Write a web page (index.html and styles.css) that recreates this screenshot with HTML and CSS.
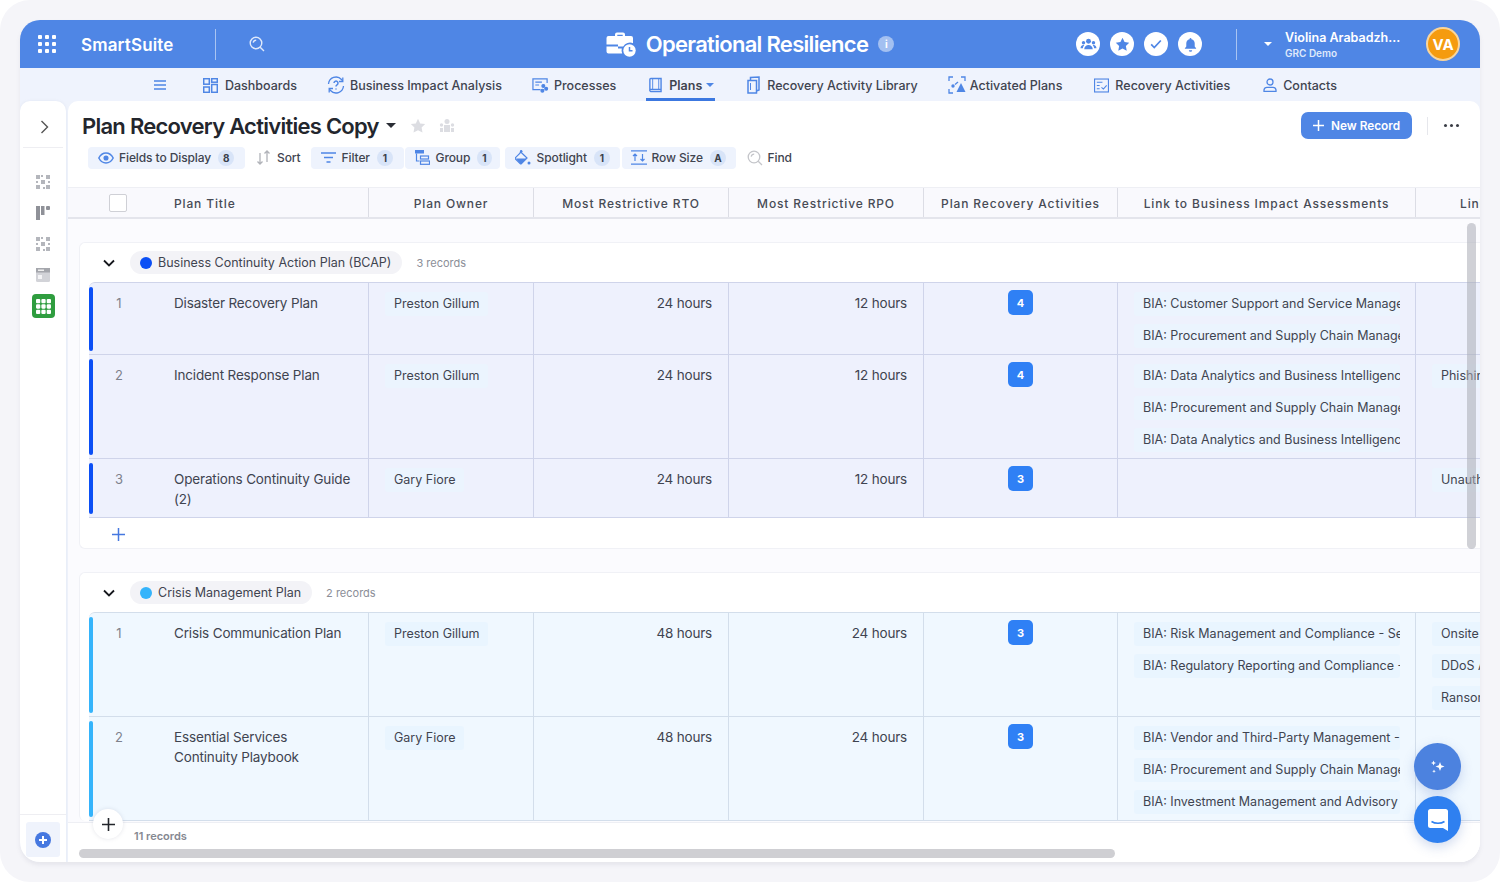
FILE: index.html
```html
<!DOCTYPE html>
<html lang="en">
<head>
<meta charset="utf-8">
<title>Operational Resilience - SmartSuite</title>
<link rel="stylesheet" href="styles.css">
</head>
<body>
<div class="frame">
<div class="app">
  <header class="topbar">
    <div class="top-left">
      <svg class="apps" viewBox="0 0 18 18" width="18" height="18"><g fill="#fff"><rect x="0" y="0" width="4" height="4" rx="1"/><rect x="7" y="0" width="4" height="4" rx="1"/><rect x="14" y="0" width="4" height="4" rx="1"/><rect x="0" y="7" width="4" height="4" rx="1"/><rect x="7" y="7" width="4" height="4" rx="1"/><rect x="14" y="7" width="4" height="4" rx="1"/><rect x="0" y="14" width="4" height="4" rx="1"/><rect x="7" y="14" width="4" height="4" rx="1"/><rect x="14" y="14" width="4" height="4" rx="1"/></g></svg>
      <span class="logo">SmartSuite</span>
      <span class="vline"></span>
      <svg class="search" viewBox="0 0 16 16" width="16" height="16" fill="none" stroke="#dfe9fb" stroke-width="1.4"><circle cx="7" cy="7" r="5.8"/><path d="M4.2 6.6a3 3 0 0 1 3-2.4M11.2 11.2L15 15"/></svg>
    </div>
    <div class="top-center">
      <svg viewBox="0 0 30 25" width="30" height="25"><path fill="#fff" d="M9 2.5A2 2 0 0 1 11 .5h6a2 2 0 0 1 2 2V4h6a2 2 0 0 1 2 2v5.2a8 8 0 0 0-9.8 3.3H12v-2H.5V6a2 2 0 0 1 2-2H9zM11.300 2.800V4h5.400V2.800zM.5 14.500H12v2h3.800a8 8 0 0 0 .4 5H2.500a2 2 0 0 1-2-2z"/><circle cx="23.500" cy="18.500" r="6.200" fill="#fff"/><path d="M23.500 15v3.800h3" fill="none" stroke="#4f86e5" stroke-width="1.500"/></svg>
      <span class="app-title">Operational Resilience</span>
      <span class="info">i</span>
    </div>
    <div class="top-right">
      <span class="round"><svg viewBox="0 0 16 16" width="17" height="17" fill="#4f86e5"><circle cx="8" cy="5" r="2.300"/><circle cx="3.300" cy="6.300" r="1.600"/><circle cx="12.700" cy="6.300" r="1.600"/><path d="M4 12.500c0-2.500 1.800-4 4-4s4 1.500 4 4zM.5 11.500c0-1.800 1-3 2.800-3 .3 0 .5 0 .7.100-.9.800-1.200 1.800-1.300 2.900zM15.500 11.500c0-1.800-1-3-2.800-3-.3 0-.5 0-.7.100.9.800 1.200 1.800 1.300 2.900z"/></svg></span>
      <span class="round"><svg viewBox="0 0 16 16" width="15" height="15" fill="#4f86e5"><path d="M8 .8l2.200 4.600 5 .7-3.600 3.500.9 5L8 12.200l-4.500 2.400.9-5L.8 6.100l5-.7z"/></svg></span>
      <span class="round"><svg viewBox="0 0 16 16" width="14" height="14" fill="none" stroke="#4f86e5" stroke-width="2"><path d="M2.500 8.500l3.500 3.500 7.500-8"/></svg></span>
      <span class="round"><svg viewBox="0 0 16 16" width="15" height="15" fill="#4f86e5"><path d="M8 1a1 1 0 0 1 1 1v.5c2.300.5 3.500 2.300 3.500 4.500v3l1.500 2v.5H2V12l1.500-2V7c0-2.200 1.200-4 3.500-4.500V2a1 1 0 0 1 1-1zM6.200 14h3.600a1.800 1.800 0 0 1-3.600 0z"/></svg></span>
      <span class="vline right-line"></span>
      <span class="caret caret-white"></span>
      <div class="user">
        <span class="user-name">Violina Arabadzh...</span>
        <span class="user-org">GRC Demo</span>
      </div>
      <span class="avatar">VA</span>
    </div>
  </header>

  <nav class="nav">
    <svg class="burger" viewBox="0 0 12 10" width="12" height="10" fill="none" stroke="#4f86e5" stroke-width="1.400"><path d="M0 1h12M0 5h12M0 9h12"/></svg>
    <a class="nav-item"><svg viewBox="0 0 15 15" width="15" height="15" fill="none" stroke="#4f86e5" stroke-width="1.500"><rect x=".7" y=".7" width="5.600" height="5.500"/><rect x="8.700" y=".7" width="5.600" height="3.500"/><rect x=".7" y="9" width="5.600" height="5.300"/><rect x="8.700" y="6.500" width="5.600" height="7.800"/></svg>Dashboards</a>
    <a class="nav-item nav-tight"><svg viewBox="0 0 18 18" width="18" height="18" fill="none" stroke="#4f86e5" stroke-width="1.300"><path d="M1.500 8a7.500 7.500 0 0 1 13-4.500L15.500 5M16.500 10a7.500 7.500 0 0 1-13 4.500L2.500 13"/><path d="M15.800 1.500V5.500H12M2.200 16.500V12.500H6"/><path d="M7 7a2 2 0 1 1 3 1.800c-.7.400-1 .8-1 1.700M9 12.500v1" stroke-width="1.500"/></svg>Business Impact Analysis</a>
    <a class="nav-item nav-tight"><svg viewBox="0 0 18 16" width="17" height="16" fill="none" stroke="#4f86e5" stroke-width="1.300"><path d="M9 13H1V1.500h15V6"/><path d="M3.500 5h7M3.500 8h4"/><circle cx="12" cy="9" r="1.500" fill="#4f86e5"/><circle cx="15" cy="12" r="1.500" fill="#4f86e5"/><circle cx="11" cy="14" r="1.500" fill="#4f86e5"/></svg>Processes</a>
    <a class="nav-item nav-active"><svg viewBox="0 0 15 16" width="14" height="16" fill="none" stroke="#4f86e5" stroke-width="1.500"><path d="M2 13V2a1 1 0 0 1 1-1h11v14H3a1.500 1.500 0 0 1-1-2zM2.500 12.700H14"/><path d="M5 1v11.500M11.500 1v11.500" stroke-width="1"/></svg>Plans<span class="caret caret-blue"></span></a>
    <a class="nav-item nav-wide"><svg viewBox="0 0 13 18" width="13" height="18" fill="none" stroke="#4f86e5" stroke-width="1.500"><path d="M1 4.500h8.500V17H1zM3.500 4.500V1.500L12 1v13l-2.500 1"/><path d="M3.500 7v7" stroke-width="1"/></svg>Recovery Activity Library</a>
    <a class="nav-item nav-tighter"><svg viewBox="0 0 18 18" width="18" height="18" fill="none" stroke="#4f86e5" stroke-width="1.300"><path d="M1 5V1h4M13 1h4v4M1 13v4h4"/><path d="M13 7l4.500 9h-9z" fill="#4f86e5" stroke="none"/><circle cx="5" cy="10" r="1.700" fill="#4f86e5" stroke="none"/><path d="M7 8.500l3-2.500"/></svg>Activated Plans</a>
    <a class="nav-item nav-act"><svg viewBox="0 0 16 15" width="15" height="15" fill="none" stroke="#4f86e5" stroke-width="1.200"><rect x=".6" y=".6" width="14.800" height="13.800"/><path d="M3 4h6M3 7.500h3M3 11h3M8 9.500l2 1.800 3.500-4"/></svg>Recovery Activities</a>
    <a class="nav-item nav-last"><svg viewBox="0 0 14 14" width="14" height="14" fill="none" stroke="#4f86e5" stroke-width="1.300"><circle cx="7" cy="4" r="3"/><path d="M1 13.300v-1.500a3 3 0 0 1 3-2.500h6a3 3 0 0 1 3 2.500v1.500z"/></svg>Contacts</a>
  </nav>

  <div class="content">
    <aside class="side">
      <svg class="side-chev" viewBox="0 0 9 14" width="9" height="14" fill="none" stroke="#555" stroke-width="1.400"><path d="M1.500 1l6 6-6 6"/></svg>
      <span class="side-rule"></span>
      <svg class="side-ico" viewBox="0 0 14 14" width="14" height="14" fill="#b4b6bc"><rect width="4" height="4"/><rect x="5" y="5" width="4" height="4"/><rect x="10" width="4" height="4"/><rect y="10" width="4" height="4"/><rect x="10" y="10" width="4" height="4"/><rect x="5" y="0" width="2" height="2"/><rect y="6" width="2" height="2"/><rect x="12" y="6" width="2" height="2"/><rect x="7" y="12" width="2" height="2"/></svg>
      <svg class="side-ico" viewBox="0 0 14 14" width="14" height="14" fill="#8f9198"><rect width="4" height="14"/><rect x="5" width="3.500" height="9"/><rect x="10" width="4" height="4" rx="1"/></svg>
      <svg class="side-ico" viewBox="0 0 14 14" width="14" height="14" fill="#b4b6bc"><rect width="4" height="4"/><rect x="5" y="5" width="4" height="4"/><rect x="10" width="4" height="4"/><rect y="10" width="4" height="4"/><rect x="10" y="10" width="4" height="4"/><rect x="5" y="0" width="2" height="2"/><rect y="6" width="2" height="2"/><rect x="12" y="6" width="2" height="2"/><rect x="7" y="12" width="2" height="2"/></svg>
      <svg class="side-ico" viewBox="0 0 14 14" width="14" height="14"><rect width="14" height="14" rx="1.500" fill="#d2d3d8"/><rect y="0" width="14" height="4.500" fill="#a4a6ac"/><rect x="2" y="1.500" width="6" height="1.500" fill="#eee"/><rect x="2" y="7" width="4" height="4" fill="#f4f4f6"/></svg>
      <span class="side-active"><svg viewBox="0 0 14 14" width="15" height="15" fill="#fff"><rect width="4" height="4" rx="1"/><rect x="5" width="4" height="4" rx="1"/><rect x="10" width="4" height="4" rx="1"/><rect y="5" width="4" height="4" rx="1"/><rect x="5" y="5" width="4" height="4" rx="1"/><rect x="10" y="5" width="4" height="4" rx="1"/><rect y="10" width="4" height="4" rx="1"/><rect x="5" y="10" width="4" height="4" rx="1"/><rect x="10" y="10" width="4" height="4" rx="1"/></svg></span>
      <span class="side-foot"><span class="side-add"><svg viewBox="0 0 16 16" width="16" height="16"><circle cx="8" cy="8" r="8" fill="#4678e0"/><path d="M8 4v8M4 8h8" stroke="#fff" stroke-width="2"/></svg></span></span>
    </aside>

    <main class="main">
      <div class="title-row">
        <h1 class="title">Plan Recovery Activities Copy</h1>
        <span class="caret caret-dark"></span>
        <svg class="title-star" viewBox="0 0 16 16" width="16" height="16" fill="#dcdde2"><path d="M8 .8l2.200 4.600 5 .7-3.600 3.500.9 5L8 12.200l-4.500 2.400.9-5L.8 6.100l5-.7z"/></svg>
        <svg class="title-team" viewBox="0 0 16 16" width="16" height="16" fill="#dcdde2"><circle cx="8" cy="3.500" r="2.500"/><circle cx="2.500" cy="7" r="1.700"/><circle cx="13.500" cy="7" r="1.700"/><rect x="5" y="7" width="6" height="7"/><rect x="1" y="10" width="3" height="4"/><rect x="12" y="10" width="3" height="4"/></svg>
        <button class="new-btn"><svg viewBox="0 0 11 11" width="11" height="11" stroke="#fff" stroke-width="1.500"><path d="M5.500 0v11M0 5.500h11"/></svg>New Record</button>
        <span class="title-rule"></span>
        <span class="dots"><i></i><i></i><i></i></span>
      </div>

      <div class="toolbar">
        <span class="tool tool-on tool-fields"><svg viewBox="0 0 16 12" width="16" height="12" fill="none" stroke="#4f86e5" stroke-width="1.500"><path d="M.8 6C2.500 2.800 5 1 8 1s5.500 1.800 7.200 5C13.500 9.200 11 11 8 11S2.500 9.200.8 6z"/><circle cx="8" cy="6" r="1.800" fill="#4f86e5"/></svg>Fields to Display<b class="count">8</b></span>
        <span class="tool tool-sort"><svg viewBox="0 0 15 15" width="15" height="15" fill="none" stroke="#b0b2b8" stroke-width="1.300"><path d="M4 3v11M1.500 11.500L4 14l2.500-2.500M11 12V1M8.500 3.500L11 1l2.500 2.500"/></svg>Sort</span>
        <span class="tool tool-on tool-filter"><svg viewBox="0 0 15 11" width="15" height="11" fill="none" stroke="#4f86e5" stroke-width="1.500"><path d="M0 1h15M3 5.500h9M5.500 10h4"/></svg>Filter<b class="count">1</b></span>
        <span class="tool tool-on tool-group"><svg viewBox="0 0 15 15" width="15" height="15" fill="none" stroke="#4f86e5" stroke-width="1.200"><rect x="0" y="0" width="9" height="3.500" fill="#4f86e5" stroke="none"/><path d="M1.500 3.500V11h3"/><rect x="5.500" y="6" width="8" height="3"/><rect x="5.500" y="11" width="9" height="3.300"/></svg>Group<b class="count">1</b></span>
        <span class="tool tool-on tool-spot"><svg viewBox="0 0 16 16" width="16" height="16" fill="#4f86e5"><path d="M6 0l1 1.500-1 .8 6 5.700-5.500 5.500a1 1 0 0 1-1.400 0L.5 9a1 1 0 0 1 0-1.400L5 3.200z" fill="none" stroke="#4f86e5" stroke-width="1.200"/><path d="M1 8.500h10.500L6.500 13.500a1 1 0 0 1-1.400 0z"/><circle cx="14" cy="13" r="1.500"/></svg>Spotlight<b class="count">1</b></span>
        <span class="tool tool-on tool-size"><svg viewBox="0 0 16 15" width="16" height="15" fill="none" stroke="#4f86e5" stroke-width="1.200"><path d="M0 .8h16M0 14.200h16M4 11V4M2 6l2-2 2 2M11.500 4v7M9.500 9l2 2 2-2"/></svg>Row Size<b class="count">A</b></span>
        <span class="tool tool-find"><svg viewBox="0 0 16 16" width="16" height="16" fill="none" stroke="#c4c5ca" stroke-width="1.300"><circle cx="7" cy="7" r="5.800"/><path d="M4.200 6.600a3 3 0 0 1 3-2.400M11.200 11.200L15 15"/></svg>Find</span>
      </div>

      <div class="thead">
        <div class="th th-first"><span class="check"></span><span>Plan Title</span></div>
        <div class="th">Plan Owner</div>
        <div class="th">Most Restrictive RTO</div>
        <div class="th">Most Restrictive RPO</div>
        <div class="th">Plan Recovery Activities</div>
        <div class="th">Link to Business Impact Assessments</div>
        <div class="th th-last">Link to Risks</div>
      </div>

      <div class="tbody">
        <section class="group">
          <div class="group-head">
            <svg class="group-chev" viewBox="0 0 12 8" width="12" height="8" fill="none" stroke="#16181d" stroke-width="1.800"><path d="M1 1.500l5 5 5-5"/></svg>
            <span class="group-pill"><i class="dot dot-blue"></i>Business Continuity Action Plan (BCAP)</span>
            <span class="group-count">3 records</span>
          </div>
          <div class="row row-blue h73">
            <div class="td td-first"><span class="num">1</span><span class="name">Disaster Recovery Plan</span></div>
            <div class="td"><span class="chip">Preston Gillum</span></div>
            <div class="td td-num">24 hours</div>
            <div class="td td-num">12 hours</div>
            <div class="td"><span class="badge">4</span></div>
            <div class="td td-stack"><span class="chip chip-long">BIA: Customer Support and Service Management</span><span class="chip chip-long">BIA: Procurement and Supply Chain Management</span></div>
            <div class="td td-last"></div>
          </div>
          <div class="row row-blue h104">
            <div class="td td-first"><span class="num">2</span><span class="name">Incident Response Plan</span></div>
            <div class="td"><span class="chip">Preston Gillum</span></div>
            <div class="td td-num">24 hours</div>
            <div class="td td-num">12 hours</div>
            <div class="td"><span class="badge">4</span></div>
            <div class="td td-stack"><span class="chip chip-long">BIA: Data Analytics and Business Intelligence</span><span class="chip chip-long">BIA: Procurement and Supply Chain Management</span><span class="chip chip-long">BIA: Data Analytics and Business Intelligence</span></div>
            <div class="td td-last td-stack"><span class="chip">Phishing Attack</span></div>
          </div>
          <div class="row row-blue h59">
            <div class="td td-first"><span class="num">3</span><span class="name">Operations Continuity Guide (2)</span></div>
            <div class="td"><span class="chip">Gary Fiore</span></div>
            <div class="td td-num">24 hours</div>
            <div class="td td-num">12 hours</div>
            <div class="td"><span class="badge">3</span></div>
            <div class="td td-stack"></div>
            <div class="td td-last td-stack"><span class="chip">Unauthorized Access</span></div>
          </div>
          <div class="add-row"><svg viewBox="0 0 13 13" width="13" height="13" stroke="#4678e0" stroke-width="1.500"><path d="M6.500 0v13M0 6.500h13"/></svg></div>
        </section>

        <section class="group group-open">
          <div class="group-head">
            <svg class="group-chev" viewBox="0 0 12 8" width="12" height="8" fill="none" stroke="#16181d" stroke-width="1.800"><path d="M1 1.500l5 5 5-5"/></svg>
            <span class="group-pill"><i class="dot dot-sky"></i>Crisis Management Plan</span>
            <span class="group-count">2 records</span>
          </div>
          <div class="row row-sky h105">
            <div class="td td-first"><span class="num">1</span><span class="name">Crisis Communication Plan</span></div>
            <div class="td"><span class="chip">Preston Gillum</span></div>
            <div class="td td-num">48 hours</div>
            <div class="td td-num">24 hours</div>
            <div class="td"><span class="badge">3</span></div>
            <div class="td td-stack"><span class="chip chip-long">BIA: Risk Management and Compliance - Security</span><span class="chip chip-long">BIA: Regulatory Reporting and Compliance - Legal</span></div>
            <div class="td td-last td-stack"><span class="chip">Onsite Incident</span><span class="chip">DDoS Attack</span><span class="chip">Ransomware</span></div>
          </div>
          <div class="row row-sky h104">
            <div class="td td-first"><span class="num">2</span><span class="name">Essential Services<br>Continuity Playbook</span></div>
            <div class="td"><span class="chip">Gary Fiore</span></div>
            <div class="td td-num">48 hours</div>
            <div class="td td-num">24 hours</div>
            <div class="td"><span class="badge">3</span></div>
            <div class="td td-stack"><span class="chip chip-long">BIA: Vendor and Third-Party Management - Procurement</span><span class="chip chip-long">BIA: Procurement and Supply Chain Management</span><span class="chip chip-long">BIA: Investment Management and Advisory</span></div>
            <div class="td td-last"></div>
          </div>
        </section>
      </div>

      <div class="tfoot">
        <span class="total">11 records</span>
        <span class="hscroll"></span>
      </div>

      <span class="vscroll"></span>
      <span class="float-add"><svg viewBox="0 0 13 13" width="13" height="13" stroke="#22252b" stroke-width="1.600"><path d="M6.500 0v13M0 6.500h13"/></svg></span>
      <span class="fab fab-ai"><svg viewBox="0 0 16 16" width="16" height="16" fill="#fff"><path d="M10 3l1.200 3.300L14.500 7.500l-3.300 1.200L10 12 8.800 8.700 5.500 7.500l3.300-1.200z"/><path d="M3.500 1.500l.7 1.800 1.800.7-1.800.7-.7 1.800-.7-1.800L1 4l1.800-.7zM4 10.500l.5 1.300 1.300.5-1.300.5L4 14.100l-.5-1.300-1.300-.5 1.300-.5z"/></svg></span>
      <span class="fab fab-chat"><svg viewBox="0 0 22 24" width="22" height="24"><path fill="#fff" d="M3.500 1h15A2.500 2.500 0 0 1 21 3.500V23l-5-3H3.500A2.500 2.500 0 0 1 1 17.500v-14A2.500 2.500 0 0 1 3.500 1z"/><path d="M4.500 13.500c3.500 2.300 9.500 2.300 13 0" fill="none" stroke="#2f80f0" stroke-width="1.500"/></svg></span>
    </main>
  </div>
</div>
</div>
</body>
</html>
```

FILE: styles.css
```css
* { box-sizing: border-box; }
html, body { margin: 0; height: 882px; background: #fff; overflow: hidden; }
body { font-family: Inter, "Noto Sans", sans-serif; color: #3f4450; }
svg { display: block; flex: none; }

.frame { width: 1500px; height: 882px; padding: 20px; background: #f5f5f9; border-radius: 30px; }
.app { width: 1460px; height: 842px; display: flex; flex-direction: column; border-radius: 20px; overflow: hidden; background: #eff3fc; box-shadow: 0 3px 4px rgba(120,125,150,.12); }

/* top bar */
.topbar { height: 48px; flex: none; background: #4f86e5; display: grid; grid-template-columns: 1fr auto 1fr; align-items: center; color: #fff; }
.top-left { display: flex; align-items: center; padding-left: 18px; }
.logo { margin-left: 25px; font-size: 17px; font-weight: 600; letter-spacing: .15px; width: 93px; white-space: nowrap; padding-top: 1px; }
.vline { width: 1px; height: 31px; background: #a9c4f2; flex: none; }
.top-left .vline { margin-left: 41px; }
.search { margin-left: 33px; }
.top-center { display: flex; align-items: center; }
.app-title { margin-left: 10px; font-size: 22px; font-weight: 600; letter-spacing: -.7px; white-space: nowrap; }
.info { margin-left: 10px; width: 16px; height: 16px; border-radius: 50%; background: #a3c0f1; color: #fff; font-size: 10px; font-weight: 700; display: flex; align-items: center; justify-content: center; }
.top-right { display: flex; align-items: center; justify-content: flex-end; padding-right: 20px; }
.round { width: 24px; height: 24px; border-radius: 50%; background: #fff; display: flex; align-items: center; justify-content: center; margin-left: 10px; }
.right-line { margin-left: 34px; }
.caret { display: inline-block; width: 0; height: 0; border-left: 4px solid transparent; border-right: 4px solid transparent; border-top: 4px solid #4f86e5; flex: none; }
.caret-white { border-top-color: #fff; margin-left: 27px; }
.caret-blue { margin-left: -3px; }
.caret-dark { border-left-width: 5px; border-right-width: 5px; border-top: 5px solid #2a2d35; margin-left: 7px; }
.user { display: flex; flex-direction: column; margin-left: 13px; width: 141px; padding-top: 2px; }
.user-name { font-size: 12.500px; font-weight: 600; line-height: 16px; white-space: nowrap; }
.user-org { font-size: 10px; font-weight: 600; line-height: 14px; color: #dfe9fb; }
.avatar { width: 34px; height: 34px; border-radius: 50%; background: #f59b0f; border: 2px solid #f9d59b; color: #fff; font-size: 15px; font-weight: 700; display: flex; align-items: center; justify-content: center; }

/* nav */
.nav { height: 33px; flex: none; display: flex; align-items: stretch; padding-left: 134px; background: #eff3fd; }
.burger { align-self: center; margin-right: 37px; }
.nav-item { display: flex; align-items: center; gap: 7px; font-size: 12.500px; font-weight: 500; color: #3f4450; margin-right: 30px; white-space: nowrap; padding-top: 1px; }
.nav-tight { gap: 5px; }
.nav-tighter { gap: 4px; }
.nav-wide { gap: 7px; margin-left: 2px; }
.nav-act { gap: 6px; margin-left: 2px; }
.nav-active { font-weight: 600; padding: 4px 1px 0 2px; border-bottom: 3px solid #3c78e0; }
.nav-last { margin-left: 3px; gap: 6px; }

/* content */
.content { flex: 1; min-height: 0; display: flex; gap: 2px; }
.side { width: 46px; flex: none; background: #fff; border-radius: 10px 10px 0 0; display: flex; flex-direction: column; align-items: center; padding-top: 19px; box-shadow: 0 0 3px rgba(130,140,170,.12); }
.side-chev { margin-left: 2px; }
.side-rule { width: 40px; height: 1px; background: #eeeef2; margin: 13px 0 20px; }
.side-ico { margin-bottom: 17px; position: relative; top: 7px; }
.side-active { width: 23px; height: 24px; border-radius: 4px; background: #2f9d3f; display: flex; align-items: center; justify-content: center; margin-top: 2px; }
.side-foot { margin-top: auto; width: 100%; border-top: 1px solid #eeeef2; padding: 7px 6px 5px; }
.side-add { height: 35px; width: 34px; background: #eff3fc; border-radius: 3px; display: flex; align-items: center; justify-content: center; }

.main { flex: 1; min-width: 0; position: relative; background: #fff; border-radius: 10px 10px 0 0; display: flex; flex-direction: column; overflow: hidden; }
.title-row { height: 46px; flex: none; display: flex; align-items: center; padding: 3px 0 0 14px; }
.title { margin: 0; font-size: 22px; font-weight: 600; color: #23262d; letter-spacing: -.74px; white-space: nowrap; line-height: 30px; }
.title-star { margin-left: 14px; }
.title-team { margin-left: 13px; }
.new-btn { margin-left: auto; height: 27px; width: 111px; border: 0; border-radius: 7px; background: #4f86e5; color: #fff; font: 600 11.800px Inter, sans-serif; display: flex; align-items: center; justify-content: center; gap: 7px; padding: 0; }
.title-rule { width: 1px; height: 18px; background: #e6e7ec; margin-left: 15px; }
.dots { display: flex; gap: 3px; margin-left: 16px; margin-right: 21px; }
.dots i { width: 3px; height: 3px; border-radius: 50%; background: #3a3d45; }

.toolbar { height: 40px; flex: none; display: flex; align-items: flex-start; padding-left: 20px; gap: 1px; }
.tool { height: 22px; display: flex; align-items: center; gap: 6px; padding-bottom: 1px; font-size: 12px; letter-spacing: -.1px; font-weight: 500; color: #3f4450; border-radius: 4px; white-space: nowrap; }
.tool-on { background: #eef3fd; padding: 0 8px 1px 10px; }
.count { width: 16px; height: 16px; border-radius: 50%; background: #d8e4f8; font-size: 10px; font-weight: 700; display: flex; align-items: center; justify-content: center; color: #3a3f4a; margin-left: 1px; }
.tool-fields { width: 157px; padding-right: 6px; gap: 5px; }
.tool-fields .count { margin-left: 2px; }
.tool-sort { margin: 0 9px 0 10px; gap: 6px; }
.tool-filter { width: 93px; }
.tool-group { width: 95px; }
.tool-spot { width: 115px; margin-left: 4px; }
.tool-size { width: 114px; margin-left: 1px; padding-left: 9px; gap: 5px; }
.tool-size .count { margin-left: 2px; }
.tool-find { margin-left: 10px; gap: 5px; }

/* table */
.thead { height: 32px; flex: none; display: grid; grid-template-columns: 301px 165px 195px 195px 194px 298px 120px; background: #f9f9fd; border-top: 1px solid #eeeff4; border-bottom: 2px solid #e4e5ec; }
.th { display: flex; align-items: center; justify-content: center; padding-top: 1px; font-size: 12px; font-weight: 500; letter-spacing: .86px; color: #474b55; border-right: 1px solid #dcdde5; white-space: nowrap; overflow: hidden; }
.th-first { justify-content: flex-start; padding-left: 41px; gap: 47px; }
.th-last { justify-content: flex-start; padding-left: 44px; border-right: 0; }
.check { width: 18px; height: 18px; border: 1px solid #cfd0d6; border-radius: 2px; background: #fff; flex: none; }

.tbody { flex: 1; min-height: 0; overflow: hidden; background: #fbfbfe; padding: 23px 0 0 11px; display: flex; flex-direction: column; gap: 23px; }
.group { background: #fff; border: 1px solid #f0f1f6; border-right: 0; border-radius: 6px 0 0 6px; padding-left: 9px; flex: none; }
.group-open { border-bottom: 0; }
.group-head { height: 39px; display: flex; align-items: center; padding-left: 14px; }
.group-chev { margin-right: 15px; }
.group-pill { height: 23px; border-radius: 12px; background: #f3f3f7; display: flex; align-items: center; padding: 0 11px 0 10px; font-size: 12.500px; color: #3f4450; white-space: nowrap; }
.dot { width: 12px; height: 12px; border-radius: 50%; margin-right: 6px; flex: none; }
.dot-blue { background: #0b4ff5; }
.dot-sky { background: #35b4fb; }
.group-count { margin-left: 14px; font-size: 11px; color: #8b8e97; }

.row { display: grid; grid-template-columns: 280px 165px 195px 195px 194px 298px 120px; position: relative; border-bottom: 1px solid #cfd4ea; }
.row::before { content: ""; position: absolute; left: 0; top: 4px; bottom: 3px; width: 4px; border-radius: 2px; }
.row-blue { background: #eef1fd; }
.row-blue::before { background: #0b4ff5; }
.row-sky { background: #f0f8ff; border-bottom-color: #d3deeb; }
.row-sky::before { background: #35b4fb; }
.group-head + .row { border-top: 1px solid #cfd4ea; border-radius: 6px 0 0 0; }
.group-head + .row-sky { border-top-color: #d3deeb; }
.h73 { height: 73px; }
.h105 { height: 105px; }
.h104 { height: 104px; }
.h59 { height: 59px; }
.td { border-right: 1px solid #cfd4ea; padding: 9px 16px 0; font-size: 13px; min-width: 0; overflow: hidden; }
.row-sky .td { border-right-color: #d3deeb; }
.td-first { display: flex; padding: 10px 14px 0 0; }
.num { width: 60px; margin-right: 25px; text-align: center; color: #7e828c; line-height: 20px; flex: none; }
.name { line-height: 20px; font-size: 13.500px; letter-spacing: -.15px; color: #3f4450; }
.chip { display: inline-block; height: 24px; line-height: 24px; padding: 0 9px; background: #ebf4fe; border-radius: 3px; white-space: nowrap; color: #3f4450; font-size: 12.500px; }
.row-sky .chip { background: #e9f5ff; }
.td-num { text-align: right; padding-top: 10px; line-height: 20px; font-size: 13.500px; letter-spacing: -.2px; }
.badge { display: flex; width: 25px; height: 25px; margin: -2px 0 0 68px; background: #2f80f5; border-radius: 5px; color: #fff; font-size: 11px; font-weight: 700; align-items: center; justify-content: center; }
.td-stack { display: flex; flex-direction: column; gap: 8px; align-items: flex-start; padding-right: 15px; }
.chip-long { width: 266px; overflow: hidden; padding-right: 0; flex: none; }
.td-last { border-right: 0; }
.add-row { height: 30px; padding: 2px 0 0 23px; display: flex; align-items: center; }

.tfoot { height: 40px; flex: none; background: #fff; border-top: 1px solid #eeeff4; padding: 6px 0 0 66px; position: relative; }
.total { display: block; font-size: 11px; font-weight: 600; color: #858891; line-height: 14px; }
.hscroll { position: absolute; left: 11px; top: 26px; width: 1036px; height: 9px; border-radius: 5px; background: #cfcfd3; }
.vscroll { position: absolute; left: 1399px; top: 122px; width: 9px; height: 326px; border-radius: 5px; background: rgba(170,172,180,.55); }
.float-add { position: absolute; left: 25px; top: 708px; width: 30px; height: 30px; border-radius: 50%; background: #fff; box-shadow: 0 0 4px rgba(120,125,150,.2); display: flex; align-items: center; justify-content: center; }
.fab { position: absolute; border-radius: 50%; display: flex; align-items: center; justify-content: center; width: 47px; height: 47px; left: 1346px; box-shadow: 0 4px 12px rgba(70,110,190,.25); }
.fab-ai { top: 642px; background: #4c82df; }
.fab-chat { top: 695px; background: #2f80f0; }
```
